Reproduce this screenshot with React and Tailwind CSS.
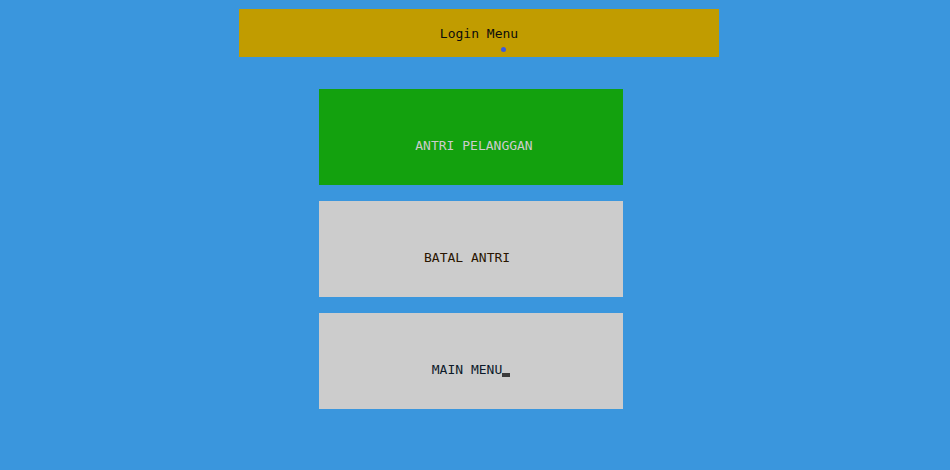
export default function App() {
  const mono = { fontFamily: '"DejaVu Sans Mono", "Liberation Mono", monospace' };

  return (
    <div className="min-h-[470px] w-full bg-[#3a96dd] flex flex-col pt-[9px]" style={mono}>
      {/* Header */}
      <div className="relative ml-[239px] w-[480px] h-[48px] bg-[#c19c00] flex items-center justify-center pt-[2px] text-[13px] text-[#0c0c0c]">
        Login Menu
        <span className="absolute left-[262px] top-[38px] w-[5px] h-[5px] rounded-full bg-[#3b5bdb]"></span>
      </div>

      {/* Menu */}
      <div className="ml-[319px] mt-[32px] flex flex-col gap-4">
        <div className="w-[304px] h-[96px] bg-[#13a10e] flex items-center justify-center pt-[18px] pl-[6px] text-[13px] text-[#cccccc]">
          ANTRI PELANGGAN
        </div>
        <div className="w-[304px] h-[96px] bg-[#cccccc] flex items-center justify-center pt-[18px] text-[13px] text-[#2a1500] whitespace-pre">
          {'BATAL ANTRI '}
        </div>
        <div className="w-[304px] h-[96px] bg-[#cccccc] flex items-center justify-center pt-[18px] text-[13px] text-[#0c1a2a]">
          MAIN MENU
          <span className="inline-block w-[8px] h-[4px] bg-[#3a3a3a] mt-[10px]"></span>
        </div>
      </div>
    </div>
  );
}
